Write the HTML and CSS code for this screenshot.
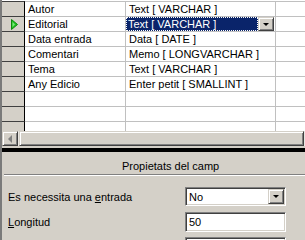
FILE: index.html
```html
<!DOCTYPE html>
<html lang="ca">
<head>
  <meta charset="UTF-8">
  <meta name="viewport" content="width=device-width, initial-scale=1.0">
  <title>Disseny de taula</title>
  <link rel="stylesheet" href="styles.css">
</head>
<body>
  <div id="window">
    <div id="grid">
      <div class="row">
        <div class="head"></div>
        <div class="cell name">Autor</div>
        <div class="cell type">Text [ VARCHAR ]</div>
        <div class="cell rest"></div>
      </div>
      <div class="row">
        <div class="head">
          <svg class="arrow" width="7" height="11" viewBox="0 0 7 11"><polygon points="0.5,0.5 6.5,5.5 0.5,10.5" fill="#1fc21f" stroke="#0d8a0d" stroke-width="1"/><polygon points="1.5,3 4,5.5 1.5,8" fill="#7fe87f"/></svg>
        </div>
        <div class="cell name">Editorial</div>
        <div class="cell type active">
          <div class="sel-combo">
            <div class="sel-text">Text [ VARCHAR ]</div>
            <div class="drop"><span class="tri"></span></div>
          </div>
        </div>
        <div class="cell rest"></div>
      </div>
      <div class="row">
        <div class="head"></div>
        <div class="cell name">Data entrada</div>
        <div class="cell type">Data [ DATE ]</div>
        <div class="cell rest"></div>
      </div>
      <div class="row">
        <div class="head"></div>
        <div class="cell name">Comentari</div>
        <div class="cell type">Memo [ LONGVARCHAR ]</div>
        <div class="cell rest"></div>
      </div>
      <div class="row">
        <div class="head"></div>
        <div class="cell name">Tema</div>
        <div class="cell type">Text [ VARCHAR ]</div>
        <div class="cell rest"></div>
      </div>
      <div class="row">
        <div class="head"></div>
        <div class="cell name">Any Edicio</div>
        <div class="cell type">Enter petit [ SMALLINT ]</div>
        <div class="cell rest"></div>
      </div>
      <div class="row">
        <div class="head"></div>
        <div class="cell name"></div>
        <div class="cell type"></div>
        <div class="cell rest"></div>
      </div>
      <div class="row">
        <div class="head"></div>
        <div class="cell name"></div>
        <div class="cell type"></div>
        <div class="cell rest"></div>
      </div>
      <div class="row">
        <div class="head"></div>
        <div class="cell name"></div>
        <div class="cell type"></div>
        <div class="cell rest"></div>
      </div>
    </div>

    <div id="hscroll">
      <div class="sb-btn"><span class="tri-left"></span></div>
      <div class="sb-thumb"></div>
    </div>

    <div id="splitter"></div>

    <div id="props">
      <div class="title">Propietats del camp</div>
      <div class="rule"></div>
      <div class="field">
        <label>Es necessita una <u>e</u>ntrada</label>
        <div class="box combo">
          <span class="value">No</span>
          <div class="drop"><span class="tri"></span></div>
        </div>
      </div>
      <div class="field">
        <label><u>L</u>ongitud</label>
        <div class="box text"><span class="value">50</span></div>
      </div>
      <div class="field">
        <label></label>
        <div class="box text"></div>
      </div>
    </div>
  </div>
</body>
</html>
```

FILE: styles.css
```css
body {
  margin: 0;
  background: #d4d0c8;
  font: 11px "Liberation Sans", Arial, sans-serif;
  color: #000;
}

#window {
  width: 305px;
  height: 240px;
  overflow: hidden;
  box-sizing: border-box;
  border-left: 2px solid #7a7a7a;
}

/* table grid */
#grid {
  height: 131px;
  overflow: hidden;
  background: #fff;
  padding-top: 1px;
  box-sizing: border-box;
}

.row {
  display: flex;
  height: 15px;
}

.head {
  width: 22px;
  flex: none;
  background: #d4d0c8;
  border-top: 1px solid #404040;
  border-right: 1px solid #000;
  display: flex;
  align-items: center;
  justify-content: center;
}

.arrow {
  margin-left: 3px;
}

.cell {
  box-sizing: border-box;
  border-top: 1px solid #c0c0c0;
  border-right: 1px solid #c0c0c0;
  padding-left: 3px;
  line-height: 14px;
  white-space: nowrap;
  overflow: hidden;
}

.name {
  width: 101px;
  flex: none;
}

.type {
  width: 150px;
  flex: none;
}

.rest {
  flex: 1;
  border-right: none;
}

.type.active {
  padding-left: 0;
}

.sel-combo {
  display: flex;
  height: 14px;
  width: 148px;
}

.sel-text {
  flex: 1;
  background: #0a246a;
  color: #fff;
  padding-left: 2px;
  outline: 1px dotted #fff;
  outline-offset: -1px;
  line-height: 14px;
}

.drop {
  width: 16px;
  flex: none;
  box-sizing: border-box;
  background: #d4d0c8;
  border: 1px solid;
  border-color: #d4d0c8 #404040 #404040 #d4d0c8;
  box-shadow: inset 1px 1px #fff, inset -1px -1px #808080;
  display: flex;
  align-items: center;
  justify-content: center;
}

.tri {
  width: 0;
  height: 0;
  border-left: 3px solid transparent;
  border-right: 3px solid transparent;
  border-top: 3px solid #000;
}

/* horizontal scrollbar */
#hscroll {
  display: flex;
  height: 15px;
  gap: 1px;
  padding-right: 1px;
  background: #e8e6e2;
}

.sb-btn,
.sb-thumb {
  box-sizing: border-box;
  background: #d4d0c8;
  border: 1px solid;
  border-color: #d4d0c8 #404040 #404040 #d4d0c8;
  box-shadow: inset 1px 1px #fff, inset -1px -1px #808080;
}

.sb-btn {
  width: 16px;
  flex: none;
  display: flex;
  align-items: center;
  justify-content: center;
}

.tri-left {
  width: 0;
  height: 0;
  border-top: 4px solid transparent;
  border-bottom: 4px solid transparent;
  border-right: 4px solid #808080;
  margin-left: -1px;
}

.sb-thumb {
  flex: 1;
}

#splitter {
  height: 4px;
  margin-top: 2px;
  background: #000;
}

/* field properties */
#props {
  padding-top: 7px;
}

.title {
  padding-left: 120px;
  line-height: 14px;
  height: 15px;
}

.rule {
  margin-left: 2px;
  border-top: 1px solid #808080;
  border-bottom: 1px solid #fff;
}

.field {
  display: flex;
  align-items: center;
  height: 25px;
  padding-left: 6px;
}

.rule + .field {
  margin-top: 8px;
}

.field label {
  width: 177px;
  flex: none;
}

.box {
  width: 101px;
  box-sizing: border-box;
  background: #fff;
  border: 1px solid;
  border-color: #808080 #fff #fff #808080;
  box-shadow: inset 1px 1px #404040, inset -1px -1px #d4d0c8;
  display: flex;
  align-items: center;
  padding: 2px 2px 2px 3px;
}

.value {
  flex: 1;
}

.combo {
  height: 19px;
}

.combo .drop {
  height: 15px;
  margin-right: -1px;
}

.text {
  height: 20px;
}
```
